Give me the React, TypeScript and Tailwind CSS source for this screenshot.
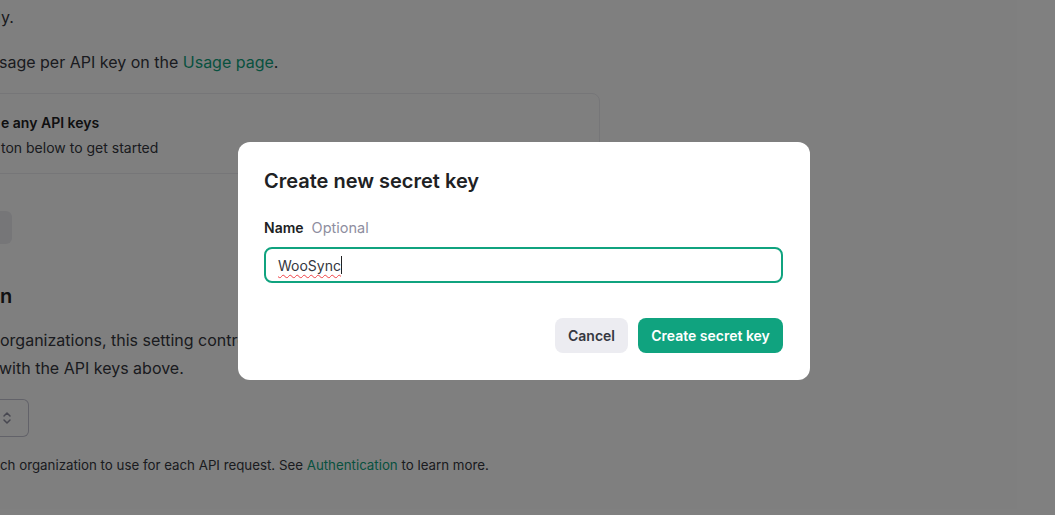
import React from "react";

export default function App() {
  return (
    <div className="relative w-[1055px] h-[515px] overflow-hidden bg-white text-[#353740] font-['Inter','Liberation_Sans',sans-serif]">
      {/* underlying page */}
      <div className="flex flex-col text-[16px] leading-[28px]">
        <div className="h-[3px]">
          <div className="-mt-[27px] whitespace-nowrap">so it is easy to spot which project a key belongs to, and to see its activity</div>
        </div>
        <div className="-ml-[3px]">ly.</div>
        <div className="mt-[17px] -ml-[1px] whitespace-nowrap">
          sage per API key on the <span className="text-[#10a37f]">Usage page</span>.
        </div>
        <div className="mt-[17px] -ml-[20px] w-[620px] h-[81px] rounded-r-[8px] border border-[#ececf1] pl-[20px] pt-[17px] text-[14px] leading-[24px]">
          <div className="font-semibold text-[#202123]">e any API keys</div>
          <div className="mt-[1px]">ton below to get started</div>
        </div>
        <div className="mt-[37px] w-[12px] h-[33px] rounded-r-[6px] bg-[#ececf1]"></div>
        <div className="mt-[38px] text-[20px] leading-[28px] font-semibold text-[#202123]">n</div>
        <div className="mt-[16px] whitespace-nowrap">organizations, this setting controls which organization is used by default</div>
        <div className="-ml-[1px] whitespace-nowrap">with the API keys above.</div>
        <div className="mt-[17px] w-[29px] h-[38px] rounded-r-[6px] border border-l-0 border-[#c5c5d2] flex items-center">
          <svg width="10" height="14" viewBox="0 0 10 14" className="ml-[2px]" fill="none" stroke="#8e8ea0" strokeWidth="1.5" strokeLinecap="round" strokeLinejoin="round">
            <path d="M2 5l3-3 3 3" />
            <path d="M2 9l3 3 3-3" />
          </svg>
        </div>
        <div className="mt-[18px] text-[13.3px] leading-[20px] whitespace-nowrap">
          ch organization to use for each API request. See <span className="text-[#10a37f]">Authentication</span> to learn more.
        </div>
      </div>

      {/* overlay */}
      <div className="absolute inset-0 bg-black/50 flex items-center justify-center pr-[7px] pt-[7px]">
        <div className="w-[572px] rounded-[12px] bg-white pl-[26px] pr-[27px] pt-[25px] pb-[27px]">
          <div className="text-[20px] leading-[28px] font-semibold text-[#202123]">Create new secret key</div>
          <div className="mt-[23px] text-[14px] leading-[20px] flex items-center">
            <span className="font-semibold text-[#202123]">Name</span>
            <span className="ml-[8px] text-[14.5px] text-[#8e8ea0]">Optional</span>
          </div>
          <div className="mt-[9px] h-[36px] rounded-[8px] border-2 border-[#10a37f] flex items-center pl-[12px] text-[14px] text-[#353740]">
            <span className="underline decoration-wavy decoration-[#ef4146] decoration-1 underline-offset-[3px]">WooSync</span>
            <span className="w-[1px] h-[18px] bg-[#202123]"></span>
          </div>
          <div className="mt-[35px] flex justify-end gap-[10px]">
            <button className="h-[35px] w-[73px] rounded-[8px] bg-[#ececf1] text-[14px] font-semibold text-[#353740]">Cancel</button>
            <button className="h-[35px] w-[145px] rounded-[8px] bg-[#10a37f] text-[14px] font-semibold text-white">Create secret key</button>
          </div>
        </div>
      </div>
    </div>
  );
}
